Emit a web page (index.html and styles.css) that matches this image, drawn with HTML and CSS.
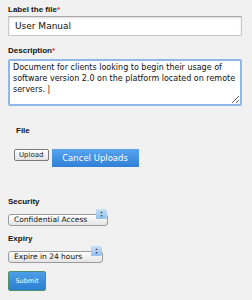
FILE: index.html
```html
<!DOCTYPE html>
<html lang="en">
<head>
  <meta charset="UTF-8" />
  <title>Upload File</title>
  <link rel="stylesheet" href="styles.css">
</head>
<body>
  <form class="upload-form">
    <div class="field">
      <label class="field-label" for="fileLabel">Label the file<span class="req">*</span></label>
      <input type="text" id="fileLabel" class="text-input" value="User Manual" />
    </div>

    <div class="field">
      <label class="field-label" for="description">Description<span class="req">*</span></label>
      <textarea id="description" class="text-area">Document for clients looking to begin their usage of software version 2.0 on the platform located on remote servers. |</textarea>
    </div>

    <div class="file-section">
      <div class="field-label">File</div>
      <div class="file-buttons">
        <button type="button" class="upload-btn">Upload</button>
        <button type="button" class="cancel-btn">Cancel Uploads</button>
      </div>
    </div>

    <div class="field select-field">
      <label class="field-label" for="security">Security</label>
      <span class="select-wrap wide">
        <select id="security" class="aqua-select">
          <option>Confidential Access</option>
          <option>Public Access</option>
        </select>
        <span class="select-arrows">&#9650;<br>&#9660;</span>
      </span>
    </div>

    <div class="field select-field">
      <label class="field-label" for="expiry">Expiry</label>
      <span class="select-wrap narrow">
        <select id="expiry" class="aqua-select">
          <option>Expire in 24 hours</option>
          <option>Expire in 7 days</option>
        </select>
        <span class="select-arrows">&#9650;<br>&#9660;</span>
      </span>
    </div>

    <button type="button" class="submit-btn">Submit</button>
  </form>
</body>
</html>
```

FILE: styles.css
```css
body {
  margin: 0;
  background: #f1f1f1;
  font-family: 'Liberation Sans', Arial, sans-serif;
  color: #222;
}

.upload-form {
  padding: 5px 10px 0 8px;
  display: flex;
  flex-direction: column;
}

.field {
  display: flex;
  flex-direction: column;
  margin-bottom: 10px;
}

.select-field {
  margin-bottom: 14px;
}

.field-label {
  font-size: 8px;
  font-weight: bold;
  line-height: 10px;
  margin-bottom: 1px;
  color: #111;
}

.req {
  color: #e0322f;
}

.text-input {
  box-sizing: border-box;
  height: 20px;
  border: 1px solid #c8c8c8;
  border-top-color: #a9a9a9;
  box-shadow: inset 0 1px 2px rgba(0, 0, 0, 0.15);
  background: #fff;
  padding: 0 6px;
  font-family: 'DejaVu Sans', sans-serif;
  font-size: 9px;
  color: #111;
}

.text-area {
  box-sizing: border-box;
  height: 47px;
  margin-top: 2px;
  border: 2px solid #8fb8e6;
  border-radius: 2px;
  background: #fff;
  padding: 1px 2px 1px 3px;
  font-family: 'DejaVu Sans', sans-serif;
  font-size: 8px;
  line-height: 11px;
  color: #111;
  resize: vertical;
}

.file-section {
  padding: 10px 0 0 8px;
  margin-bottom: 30px;
}

.file-section .field-label {
  margin-bottom: 13px;
}

.file-buttons {
  display: flex;
  align-items: flex-start;
  gap: 3px;
  margin-left: -2px;
}

.upload-btn {
  height: 12px;
  padding: 0 4px;
  border: 1px solid #7a7a7a;
  border-radius: 2px;
  background: linear-gradient(#ffffff, #e2e2e2);
  font-family: 'DejaVu Sans', sans-serif;
  font-size: 7px;
  line-height: 10px;
  color: #222;
}

.cancel-btn {
  width: 87px;
  height: 18px;
  padding: 0;
  border: none;
  background: linear-gradient(#58a4ee, #2f80d6);
  color: #fff;
  font-family: 'DejaVu Sans', sans-serif;
  font-size: 8.5px;
}

.select-wrap {
  position: relative;
  display: block;
  height: 12px;
}

.select-wrap.wide {
  width: 100px;
}

.select-wrap.narrow {
  width: 95px;
}

.aqua-select {
  appearance: none;
  -webkit-appearance: none;
  box-sizing: border-box;
  width: 100%;
  height: 12px;
  margin: 0;
  padding: 0 0 0 5px;
  border: 1px solid #9a9a9a;
  border-radius: 3px;
  background: linear-gradient(#ffffff, #e4e4e4);
  font-family: 'DejaVu Sans', sans-serif;
  font-size: 7.5px;
  line-height: 10px;
  color: #111;
}

.select-arrows {
  position: absolute;
  top: 1px;
  right: 1px;
  width: 11px;
  height: 10px;
  border-radius: 0 2px 2px 0;
  background: linear-gradient(#c9e0f6, #8ebfec);
  font-size: 3px;
  line-height: 4px;
  text-align: center;
  color: #222;
  padding-top: 1px;
  box-sizing: border-box;
}

.submit-btn {
  align-self: flex-start;
  width: 38px;
  height: 20px;
  margin-top: 0;
  padding: 0;
  border: 1px solid #4f8f6a;
  border-radius: 2px;
  background: linear-gradient(#4c9ee8, #2b7fd0);
  color: #fff;
  font-family: 'DejaVu Sans', sans-serif;
  font-size: 6.5px;
}
```
